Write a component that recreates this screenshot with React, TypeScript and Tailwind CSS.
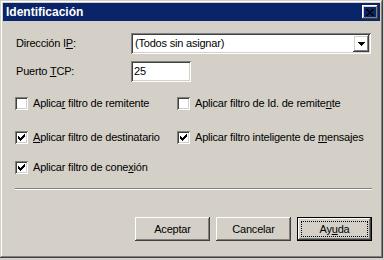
import React from "react";

const raised =
  "shadow-[inset_-1px_-1px_#404040,inset_1px_1px_#ffffff,inset_-2px_-2px_#808080,inset_2px_2px_#d4d0c8]";
const sunken =
  "shadow-[inset_1px_1px_#808080,inset_-1px_-1px_#ffffff,inset_2px_2px_#404040,inset_-2px_-2px_#d4d0c8]";

const CHECK = ["......X", ".....XX", "X...XXX", "XX.XXX.", "XXXXX..", ".XXX...", "..X...."];

const CheckMark = () => (
  <svg width="7" height="7" viewBox="0 0 7 7" shapeRendering="crispEdges">
    {CHECK.map((row, y) =>
      row.split("").map((c, x) => (c === "X" ? <rect key={`${x}-${y}`} x={x} y={y} width="1" height="1" fill="#000" /> : null))
    )}
  </svg>
);

const CheckBox = ({ checked, children }: { checked?: boolean; children: React.ReactNode }) => (
  <div className="flex items-center h-[13px]">
    <div className={`w-[13px] h-[13px] bg-white flex items-center justify-center shrink-0 ${sunken}`}>
      {checked && <CheckMark />}
    </div>
    <span className="ml-[5px] leading-none">{children}</span>
  </div>
);

const Button = ({ children, isDefault }: { children: React.ReactNode; isDefault?: boolean }) =>
  isDefault ? (
    <div className="w-[75px] h-[24px] border border-black">
      <div className={`w-full h-full flex items-center justify-center relative ${raised}`}>
        <div className="absolute inset-[3px] border border-dotted border-black"></div>
        <span>{children}</span>
      </div>
    </div>
  ) : (
    <div className={`w-[75px] h-[24px] flex items-center justify-center ${raised}`}>{children}</div>
  );

export default function App() {
  return (
    <div className="w-[384px] h-[260px] bg-[#d4d0c8]">
      <div
        className={`w-[383px] h-[258px] bg-[#d4d0c8] p-[3px] flex flex-col text-[11px] tracking-[-0.2px] text-black ${
          "shadow-[inset_-1px_-1px_#404040,inset_1px_1px_#d4d0c8,inset_-2px_-2px_#808080,inset_2px_2px_#ffffff]"
        }`}
        style={{ fontFamily: '"Liberation Sans", Arial, sans-serif' }}
      >
        <div className="h-[18px] bg-[#0a246a] flex items-center justify-between pl-[3px] pr-[2px]">
          <span className="text-white font-bold text-[12px] tracking-normal leading-none">Identificación</span>
          <div className={`w-[16px] h-[14px] flex items-center justify-center ${raised}`}>
            <svg width="8" height="7" viewBox="0 0 8 7" shapeRendering="crispEdges">
              <path d="M0 0h2v1h1v1h2v-1h1v-1h2v1h-1v1h-1v1h-1v1h1v1h1v1h1v1h-2v-1h-1v-1h-2v1h-1v1h-2v-1h1v-1h1v-1h1v-1h-1v-1h-1v-1h-1z" fill="#000" />
            </svg>
          </div>
        </div>

        <div className="flex flex-col pl-[12px] pt-[12px]">
          <div className="flex items-center h-[21px]">
            <span className="w-[116px] pl-px">
              Dirección I<u>P</u>:
            </span>
            <div className={`w-[240px] h-[21px] bg-white flex items-center justify-between pl-[4px] pr-[2px] ${sunken}`}>
              <span>(Todos sin asignar)</span>
              <div className={`w-[16px] h-[17px] flex items-center justify-center ${raised}`}>
                <svg width="7" height="4" viewBox="0 0 7 4" shapeRendering="crispEdges">
                  <path d="M0 0h7v1h-1v1h-1v1h-1v1h-1v-1h-1v-1h-1v-1h-1z" fill="#000" />
                </svg>
              </div>
            </div>
          </div>

          <div className="flex items-center h-[21px] mt-[7px]">
            <span className="w-[116px] pl-px">
              Puerto <u>T</u>CP:
            </span>
            <div className={`w-[60px] h-[21px] bg-white flex items-center pl-[3px] ${sunken}`}>25</div>
          </div>

          <div className="grid grid-cols-[162px_1fr] mt-[15px]">
            <CheckBox>
              Aplica<u>r</u> filtro de remitente
            </CheckBox>
            <CheckBox>
              Aplicar filtro de Id. de remite<u>n</u>te
            </CheckBox>
            <div className="h-[21px] col-span-2"></div>
            <CheckBox checked>
              <u>A</u>plicar filtro de destinatario
            </CheckBox>
            <CheckBox checked>
              Aplicar filtro inteligente de <u>m</u>ensajes
            </CheckBox>
            <div className="h-[17px] col-span-2"></div>
            <CheckBox checked>
              Aplicar filtro de cone<u>x</u>ión
            </CheckBox>
          </div>

          <div className="w-[357px] mt-[14px] border-t border-t-[#808080] border-b border-b-white"></div>

          <div className="w-[357px] flex justify-end gap-[6px] mt-[27px]">
            <Button>Aceptar</Button>
            <Button>Cancelar</Button>
            <Button isDefault>
              Ay<u>u</u>da
            </Button>
          </div>
        </div>
      </div>
    </div>
  );
}
